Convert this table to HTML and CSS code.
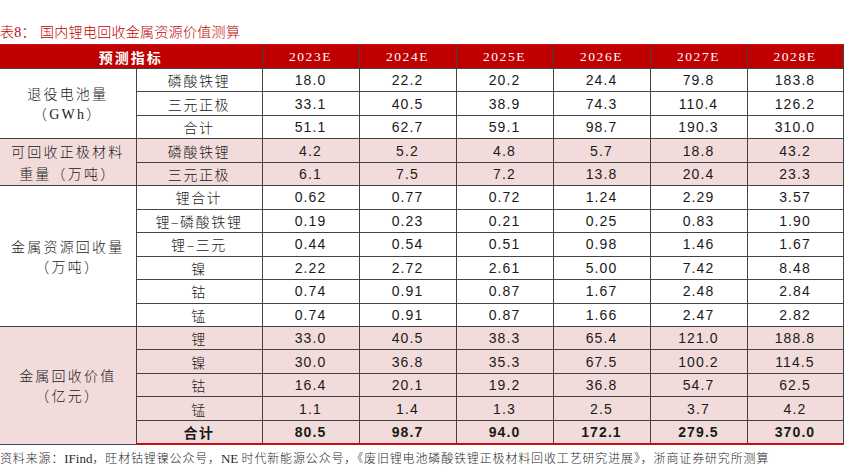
FILE: index.html
```html
<!DOCTYPE html>
<html lang="zh-CN">
<head>
<meta charset="utf-8">
<title>国内锂电回收金属资源价值测算</title>
<link rel="stylesheet" href="styles.css">
</head>
<body>
<div class="title"><span class="tno">表8：</span>国内锂电回收金属资源价值测算</div>
<table class="tbl">
  <colgroup>
    <col class="c-group"><col class="c-item">
    <col class="c-year"><col class="c-year"><col class="c-year"><col class="c-year"><col class="c-year"><col class="c-last">
  </colgroup>
  <thead>
    <tr class="head">
      <th colspan="2" class="h-name">预测指标</th>
      <th>2023E</th><th>2024E</th><th>2025E</th><th>2026E</th><th>2027E</th><th>2028E</th>
    </tr>
  </thead>
  <tbody>
    <tr>
      <td rowspan="3" class="grp">退役电池量<br><span class="unit">（GWh）</span></td>
      <td class="item">磷酸铁锂</td><td>18.0</td><td>22.2</td><td>20.2</td><td>24.4</td><td>79.8</td><td>183.8</td>
    </tr>
    <tr><td class="item">三元正极</td><td>33.1</td><td>40.5</td><td>38.9</td><td>74.3</td><td>110.4</td><td>126.2</td></tr>
    <tr><td class="item">合计</td><td>51.1</td><td>62.7</td><td>59.1</td><td>98.7</td><td>190.3</td><td>310.0</td></tr>

    <tr class="pink">
      <td rowspan="2" class="grp grp2">可回收正极材料<br>重量（万吨）</td>
      <td class="item">磷酸铁锂</td><td>4.2</td><td>5.2</td><td>4.8</td><td>5.7</td><td>18.8</td><td>43.2</td>
    </tr>
    <tr class="pink"><td class="item">三元正极</td><td>6.1</td><td>7.5</td><td>7.2</td><td>13.8</td><td>20.4</td><td>23.3</td></tr>

    <tr>
      <td rowspan="6" class="grp">金属资源回收量<br>（万吨）</td>
      <td class="item">锂合计</td><td>0.62</td><td>0.77</td><td>0.72</td><td>1.24</td><td>2.29</td><td>3.57</td>
    </tr>
    <tr><td class="item">锂–磷酸铁锂</td><td>0.19</td><td>0.23</td><td>0.21</td><td>0.25</td><td>0.83</td><td>1.90</td></tr>
    <tr><td class="item">锂–三元</td><td>0.44</td><td>0.54</td><td>0.51</td><td>0.98</td><td>1.46</td><td>1.67</td></tr>
    <tr><td class="item">镍</td><td>2.22</td><td>2.72</td><td>2.61</td><td>5.00</td><td>7.42</td><td>8.48</td></tr>
    <tr><td class="item">钴</td><td>0.74</td><td>0.91</td><td>0.87</td><td>1.67</td><td>2.48</td><td>2.84</td></tr>
    <tr><td class="item">锰</td><td>0.74</td><td>0.91</td><td>0.87</td><td>1.66</td><td>2.47</td><td>2.82</td></tr>

    <tr class="pink">
      <td rowspan="5" class="grp grp4">金属回收价值<br>（亿元）</td>
      <td class="item">锂</td><td>33.0</td><td>40.5</td><td>38.3</td><td>65.4</td><td>121.0</td><td>188.8</td>
    </tr>
    <tr class="pink"><td class="item">镍</td><td>30.0</td><td>36.8</td><td>35.3</td><td>67.5</td><td>100.2</td><td>114.5</td></tr>
    <tr class="pink"><td class="item">钴</td><td>16.4</td><td>20.1</td><td>19.2</td><td>36.8</td><td>54.7</td><td>62.5</td></tr>
    <tr class="pink"><td class="item">锰</td><td>1.1</td><td>1.4</td><td>1.3</td><td>2.5</td><td>3.7</td><td>4.2</td></tr>
    <tr class="pink total"><td class="item">合计</td><td>80.5</td><td>98.7</td><td>94.0</td><td>172.1</td><td>279.5</td><td>370.0</td></tr>
  </tbody>
</table>
<div class="source">资料来源：<span class="latin">IFind</span>，旺材钴锂镍公众号，<span class="latin">NE </span>时代新能源公众号，《废旧锂电池磷酸铁锂正极材料回收工艺研究进展》，浙商证券研究所测算</div>
</body>
</html>
```
FILE: styles.css
```css
html, body {
  margin: 0;
  padding: 0;
  background: #ffffff;
}

body {
  width: 852px;
  height: 472px;
  overflow: hidden;
  font-family: "Noto Sans CJK SC", sans-serif;
  color: #1a1a1a;
}

.title {
  box-sizing: border-box;
  height: 44px;
  padding-top: 22px;
  line-height: 18px;
  font-size: 14px;
  color: #c00000;
  font-family: "Noto Sans CJK SC", sans-serif;
  font-weight: 300;
  letter-spacing: 0.3px;
  white-space: nowrap;
}

.tno {
  display: inline-block;
  width: 40px;
  font-family: "Liberation Serif", "Noto Sans CJK SC", serif;
}

.tbl {
  width: 843px;
  table-layout: fixed;
  border-collapse: collapse;
  border-spacing: 0;
}

.c-group { width: 136px; }
.c-item { width: 126px; }
.c-year { width: 97px; }
.c-last { width: 96px; }

.tbl th,
.tbl td {
  padding: 0;
  border: 1px solid #444444;
  text-align: center;
  vertical-align: middle;
  overflow: hidden;
  white-space: nowrap;
}

.tbl tr > :first-child {
  border-left: none;
}

.head th {
  height: 23px;
  background: #c00000;
  color: #ffffff;
  font-family: "Liberation Serif", serif;
  font-weight: normal;
  font-size: 13.5px;
  letter-spacing: 1.6px;
  border-top: 1px solid #d01010;
}

.head .h-name {
  font-family: "Noto Sans CJK SC", sans-serif;
  font-weight: bold;
  font-size: 14px;
  letter-spacing: 2px;
}

.tbl tbody td {
  height: 22.46px;
  line-height: 16px;
  font-family: "Liberation Sans", "Noto Sans CJK SC", sans-serif;
  font-size: 14px;
  letter-spacing: 1.1px;
}

.tbl tbody td.item {
  font-family: "Noto Sans CJK SC", sans-serif;
  font-weight: 300;
  font-size: 14px;
  letter-spacing: 1.6px;
}

.tbl tbody td.grp {
  font-family: "Noto Sans CJK SC", sans-serif;
  font-weight: 300;
  font-size: 14px;
  letter-spacing: 2.2px;
  line-height: 20px;
  background: #ffffff;
}

.tbl tbody td.grp2 {
  line-height: 22px;
}

.unit {
  font-family: "Liberation Serif", "Noto Sans CJK SC", serif;
}

.pink td,
.tbl tbody td.grp2,
.tbl tbody td.grp4 {
  background: #f2dcdb;
}

.total td {
  font-weight: bold;
  border-bottom: 2px solid #c8101a;
}

.tbl tbody .total td.item {
  font-weight: bold;
}

.source {
  margin-top: 5px;
  line-height: 16px;
  font-size: 12px;
  letter-spacing: 0.85px;
  color: #2a2a2a;
  font-family: "Noto Sans CJK SC", sans-serif;
  font-weight: 300;
  white-space: nowrap;
}

.source .latin {
  font-family: "Liberation Serif", serif;
  font-size: 13px;
  letter-spacing: 0;
}
```
